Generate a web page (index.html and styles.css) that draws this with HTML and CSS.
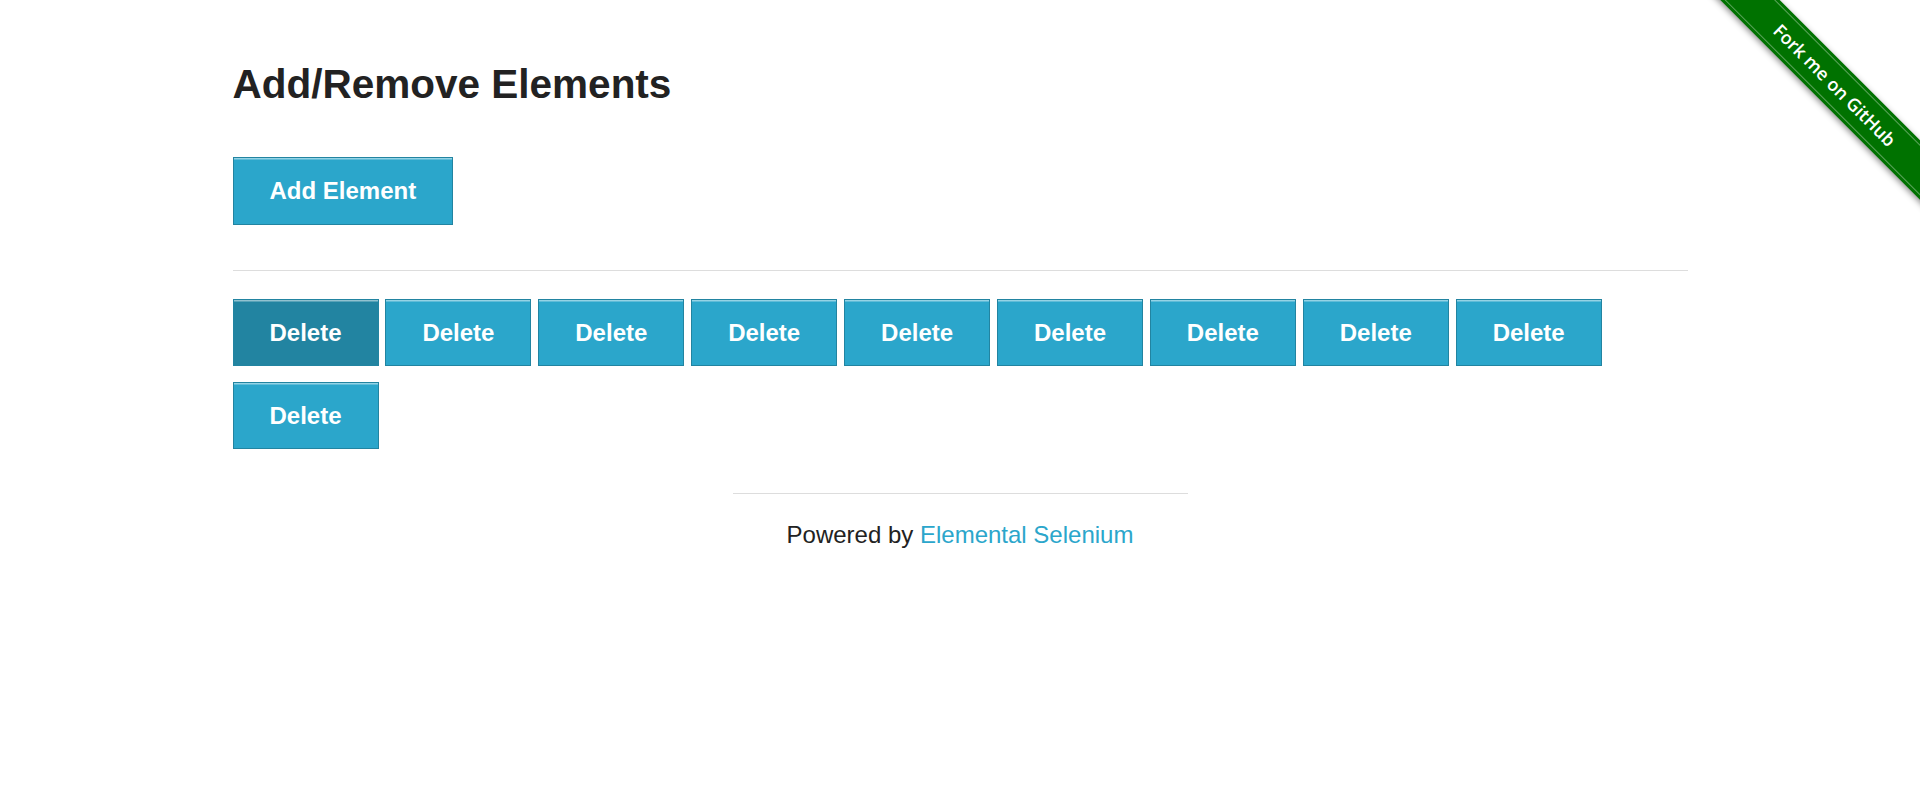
FILE: index.html
```html
<!DOCTYPE html>
<html lang="en">
<head>
<meta charset="utf-8">
<title>The Internet</title>
<link rel="stylesheet" href="styles.css">
</head>
<body>
<div class="fork">
  <a class="ribbon" href="#"><span>Fork me on GitHub</span></a>
</div>
<div class="row">
  <div class="example">
    <h3>Add/Remove Elements</h3>
    <div class="actions">
      <button class="btn">Add Element</button>
    </div>
    <hr class="divider">
    <div class="elements">
      <button class="btn added-manually active">Delete</button>
      <button class="btn added-manually">Delete</button>
      <button class="btn added-manually">Delete</button>
      <button class="btn added-manually">Delete</button>
      <button class="btn added-manually">Delete</button>
      <button class="btn added-manually">Delete</button>
      <button class="btn added-manually">Delete</button>
      <button class="btn added-manually">Delete</button>
      <button class="btn added-manually">Delete</button>
      <button class="btn added-manually">Delete</button>
    </div>
  </div>
  <div class="page-footer">
    <hr class="footer-rule">
    <div class="powered">Powered by <a href="#">Elemental Selenium</a></div>
  </div>
</div>
</body>
</html>
```
FILE: styles.css
```css
html, body {
  margin: 0;
  padding: 0;
  background: #ffffff;
}
body {
  font-family: "Liberation Sans", Arial, Helvetica, sans-serif;
  color: #222222;
  font-size: 24px;
}
.row {
  max-width: 1500px;
  margin: 0 auto;
  padding: 60px 22.5px 0;
  box-sizing: border-box;
}
h3 {
  margin: 0;
  font-size: 40.5px;
  line-height: 48.6px;
  font-weight: bold;
  color: #222222;
}
.actions {
  display: flex;
  margin-top: 48.7px;
}
.btn {
  font-family: "Liberation Sans", Arial, Helvetica, sans-serif;
  font-size: 24px;
  font-weight: bold;
  line-height: 29.3px;
  color: #ffffff;
  background: #2ba6cb;
  border: 1px solid #2284a1;
  box-shadow: inset 0 1.5px 0 rgba(255, 255, 255, 0.5);
  padding: 18px 36px;
  margin: 0;
  border-radius: 0;
  cursor: pointer;
}
.btn.active {
  background: #2284a1;
}
.divider {
  margin: 45.6px 0 0;
  border: 0;
  border-top: 1px solid #dddddd;
  height: 0;
}
.elements {
  display: flex;
  flex-wrap: wrap;
  column-gap: 6.85px;
  row-gap: 15.6px;
  margin-top: 28px;
}
.page-footer {
  width: 455px;
  margin: 43.8px auto 0;
}
.footer-rule {
  margin: 0;
  border: 0;
  border-top: 1px solid #dddddd;
  height: 0;
}
.powered {
  margin-top: 23px;
  text-align: center;
  line-height: 36px;
  font-size: 24px;
}
.powered a {
  color: #2ba6cb;
  text-decoration: none;
}
.fork {
  position: absolute;
  top: 0;
  right: 0;
  width: 224px;
  height: 224px;
  overflow: hidden;
}
.ribbon {
  position: absolute;
  left: -21.5px;
  top: 64px;
  width: 320px;
  height: 42px;
  background: #007200;
  transform: rotate(45deg);
  box-shadow: 0 2px 6px rgba(0, 0, 0, 0.45);
  color: #ffffff;
  text-decoration: none;
  text-align: center;
  font-family: "Open Sans", "DejaVu Sans", sans-serif;
  font-size: 18px;
  font-weight: 600;
  line-height: 42px;
}
.ribbon::before {
  content: "";
  position: absolute;
  left: 0;
  right: 0;
  top: 3px;
  bottom: 3px;
  border-top: 1px solid rgba(255, 255, 255, 0.35);
  border-bottom: 1px solid rgba(255, 255, 255, 0.35);
}
.ribbon span {
  position: relative;
}
```
